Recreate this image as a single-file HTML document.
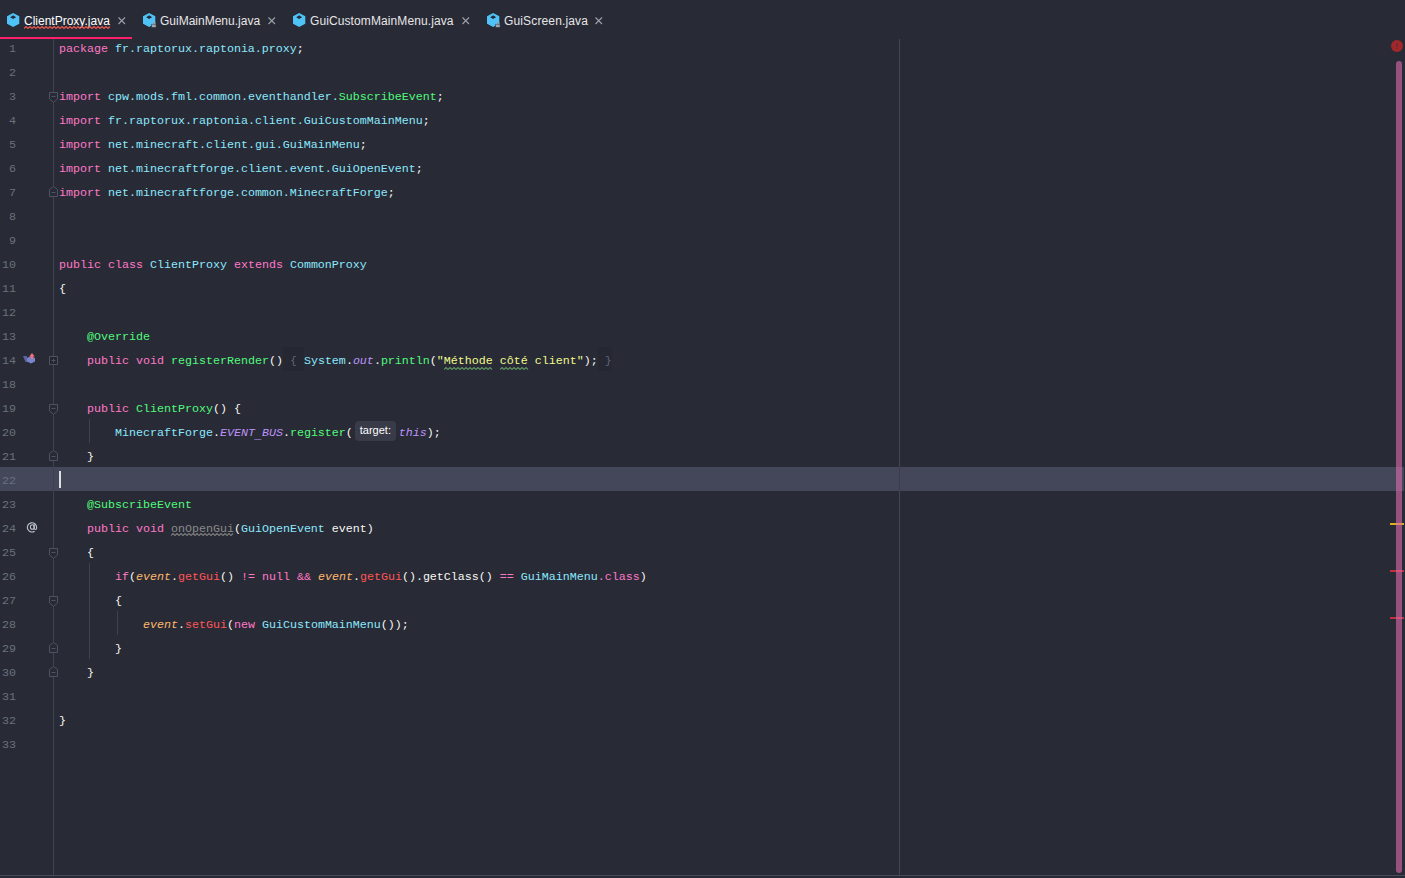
<!DOCTYPE html>
<html><head><meta charset="utf-8"><style>
html,body{margin:0;padding:0;}
body{width:1405px;height:878px;background:#282a36;position:relative;overflow:hidden;font-family:"Liberation Mono",monospace;}
.tabs{position:absolute;left:0;top:0;width:1405px;height:39px;background:#282a36;}
.ticon{position:absolute;top:12.9px;width:16px;height:16px;}
.ticon svg{display:block}
.tt{position:absolute;top:13px;font-family:"Liberation Sans",sans-serif;font-size:12px;line-height:16px;color:#e6e6e6;white-space:pre;}
.tt.act{color:#ffffff;}
.zz{position:absolute;display:block;}
.tx{position:absolute;top:16.5px;}
.uline{position:absolute;left:0;top:37px;width:132px;height:2px;background:#ff1e6a;}
.cur{position:absolute;left:0;width:1404px;height:24px;background:#44475a;}
.ln{position:absolute;left:0;width:16px;margin-top:2px;text-align:right;font-size:11.667px;line-height:24px;color:#68727e;}
.cl{position:absolute;left:59px;margin-top:2px;font-size:11.667px;line-height:24px;color:#f8f8f2;white-space:pre;}
.i{font-style:italic}
.fold{display:inline-block;vertical-align:top;height:23px;margin-top:-2px;line-height:24px;padding-top:2px;box-sizing:border-box;height:24px;color:#5f6577;background:#252732;}
.hint{display:inline-block;vertical-align:top;box-sizing:border-box;width:41px;height:20px;margin:0 3px 0 2px;position:relative;top:0px;font-family:"Liberation Sans",sans-serif;font-size:11px;line-height:19px;text-align:center;color:#ffffff;background:#393b48;border-radius:4px;}
.gutline{position:absolute;left:53px;top:39px;width:1px;height:836px;background:#3f4250;}
.margin{position:absolute;left:899px;top:39px;width:1px;height:836px;background:#434554;}
.fm{position:absolute;left:49px;}
.gi{position:absolute;}
.at{position:absolute;left:26.5px;margin-top:-0.5px;font-family:"Liberation Sans",sans-serif;font-size:12px;line-height:24px;color:#b8c4cc;}
.guide{position:absolute;width:1px;background:#3e4150;}
.caret{position:absolute;left:59px;width:2px;background:#e0e0e0;}
.sb{position:absolute;left:1396px;top:61px;width:6px;height:812px;border-radius:3px;background:rgba(223,109,174,0.6);}
.err{position:absolute;left:1391px;top:40px;width:12px;height:12px;border-radius:50%;background:#a12828;}
.err:before{content:"";position:absolute;left:5px;top:3px;width:2px;height:3.6px;background:#75283a;}
.err:after{content:"";position:absolute;left:5px;top:8px;width:2px;height:1.2px;background:#75283a;}
.mk{position:absolute;left:1390px;width:14px;height:2px;}
.hbar{position:absolute;left:0;top:875px;width:1405px;height:1px;background:#484a5c;}
</style></head><body>
<div class="tabs"><div class="ticon" style="left:7px"><svg width="16" height="16" viewBox="0 0 16 16"><path d="M6.15 0L12.3 3.3V10.8L6.15 14.1L0 10.8V3.3Z" fill="#4fc3f7"/><path d="M6.15 2.3L9.1 4.15L6.15 6L3.2 4.15Z" fill="#282a36"/></svg></div><div class="tt act" style="left:24px;letter-spacing:0px">ClientProxy.java</div><svg class="tx" style="left:117.5px" width="8" height="8" viewBox="0 0 8 8"><path d="M0.5 0.5L7 7M7 0.5L0.5 7" stroke="#9ba3a8" stroke-width="1.1"/></svg><div class="ticon" style="left:143px"><svg width="16" height="16" viewBox="0 0 16 16"><path d="M6.15 0L12.3 3.3V10.8L6.15 14.1L0 10.8V3.3Z" fill="#4fc3f7"/><path d="M6.15 2.3L9.1 4.15L6.15 6L3.2 4.15Z" fill="#282a36"/><path d="M8.6 11.2h4.5v3.3h-4.5z" fill="#9eaab2" stroke="#282a36" stroke-width="0.6"/><path d="M9.6 11.4v-1.1a1.25 1.25 0 0 1 2.5 0v1.1" fill="none" stroke="#9eaab2" stroke-width="0.9"/></svg></div><div class="tt" style="left:160px;letter-spacing:0px">GuiMainMenu.java</div><svg class="tx" style="left:267.5px" width="8" height="8" viewBox="0 0 8 8"><path d="M0.5 0.5L7 7M7 0.5L0.5 7" stroke="#9ba3a8" stroke-width="1.1"/></svg><div class="ticon" style="left:293px"><svg width="16" height="16" viewBox="0 0 16 16"><path d="M6.15 0L12.3 3.3V10.8L6.15 14.1L0 10.8V3.3Z" fill="#4fc3f7"/><path d="M6.15 2.3L9.1 4.15L6.15 6L3.2 4.15Z" fill="#282a36"/></svg></div><div class="tt" style="left:310px;letter-spacing:0.1px">GuiCustomMainMenu.java</div><svg class="tx" style="left:461.5px" width="8" height="8" viewBox="0 0 8 8"><path d="M0.5 0.5L7 7M7 0.5L0.5 7" stroke="#9ba3a8" stroke-width="1.1"/></svg><div class="ticon" style="left:487px"><svg width="16" height="16" viewBox="0 0 16 16"><path d="M6.15 0L12.3 3.3V10.8L6.15 14.1L0 10.8V3.3Z" fill="#4fc3f7"/><path d="M6.15 2.3L9.1 4.15L6.15 6L3.2 4.15Z" fill="#282a36"/><path d="M8.6 11.2h4.5v3.3h-4.5z" fill="#9eaab2" stroke="#282a36" stroke-width="0.6"/><path d="M9.6 11.4v-1.1a1.25 1.25 0 0 1 2.5 0v1.1" fill="none" stroke="#9eaab2" stroke-width="0.9"/></svg></div><div class="tt" style="left:504px;letter-spacing:0.14px">GuiScreen.java</div><svg class="tx" style="left:595px" width="8" height="8" viewBox="0 0 8 8"><path d="M0.5 0.5L7 7M7 0.5L0.5 7" stroke="#9ba3a8" stroke-width="1.1"/></svg><div class="uline"></div></div>
<div class="ln" style="top:35px">1</div><div class="cl" style="top:35px"><span style="color:#ff79c6">package</span> <span style="color:#8be9fd">fr.raptorux.raptonia.proxy</span><span style="color:#f8f8f2">;</span></div><div class="ln" style="top:59px">2</div><div class="ln" style="top:83px">3</div><div class="cl" style="top:83px"><span style="color:#ff79c6">import</span> <span style="color:#8be9fd">cpw.mods.fml.common.eventhandler.</span><span style="color:#50fa7b">SubscribeEvent</span><span style="color:#f8f8f2">;</span></div><div class="ln" style="top:107px">4</div><div class="cl" style="top:107px"><span style="color:#ff79c6">import</span> <span style="color:#8be9fd">fr.raptorux.raptonia.client.GuiCustomMainMenu</span><span style="color:#f8f8f2">;</span></div><div class="ln" style="top:131px">5</div><div class="cl" style="top:131px"><span style="color:#ff79c6">import</span> <span style="color:#8be9fd">net.minecraft.client.gui.GuiMainMenu</span><span style="color:#f8f8f2">;</span></div><div class="ln" style="top:155px">6</div><div class="cl" style="top:155px"><span style="color:#ff79c6">import</span> <span style="color:#8be9fd">net.minecraftforge.client.event.GuiOpenEvent</span><span style="color:#f8f8f2">;</span></div><div class="ln" style="top:179px">7</div><div class="cl" style="top:179px"><span style="color:#ff79c6">import</span> <span style="color:#8be9fd">net.minecraftforge.common.MinecraftForge</span><span style="color:#f8f8f2">;</span></div><div class="ln" style="top:203px">8</div><div class="ln" style="top:227px">9</div><div class="ln" style="top:251px">10</div><div class="cl" style="top:251px"><span style="color:#ff79c6">public</span> <span style="color:#ff79c6">class</span> <span style="color:#8be9fd">ClientProxy</span> <span style="color:#ff79c6">extends</span> <span style="color:#8be9fd">CommonProxy</span></div><div class="ln" style="top:275px">11</div><div class="cl" style="top:275px"><span style="color:#f8f8f2">{</span></div><div class="ln" style="top:299px">12</div><div class="ln" style="top:323px">13</div><div class="cl" style="top:323px">    <span style="color:#50fa7b">@Override</span></div><div class="ln" style="top:347px">14</div><div class="cl" style="top:347px">    <span style="color:#ff79c6">public</span> <span style="color:#ff79c6">void</span> <span style="color:#50fa7b">registerRender</span><span style="color:#f8f8f2">()</span><span class="fold"> { </span><span style="color:#8be9fd">System</span><span style="color:#f8f8f2">.</span><span class="i" style="color:#bd93f9">out</span><span style="color:#f8f8f2">.</span><span style="color:#50fa7b">println</span><span style="color:#f8f8f2">(</span><span style="color:#f1fa8c">&quot;Méthode côté client&quot;</span><span style="color:#f8f8f2">);</span><span class="fold"> }</span></div><div class="ln" style="top:371px">18</div><div class="ln" style="top:395px">19</div><div class="cl" style="top:395px">    <span style="color:#ff79c6">public</span> <span style="color:#50fa7b">ClientProxy</span><span style="color:#f8f8f2">() {</span></div><div class="ln" style="top:419px">20</div><div class="cl" style="top:419px">        <span style="color:#8be9fd">MinecraftForge</span><span style="color:#f8f8f2">.</span><span class="i" style="color:#bd93f9">EVENT<span style="position:relative;top:3px">_</span>BUS</span><span style="color:#f8f8f2">.</span><span style="color:#50fa7b">register</span><span style="color:#f8f8f2">(</span><span class="hint">target:</span><span class="i" style="color:#bd93f9">this</span><span style="color:#f8f8f2">);</span></div><div class="ln" style="top:443px">21</div><div class="cl" style="top:443px">    <span style="color:#f8f8f2">}</span></div><div class="cur" style="top:467px"></div><div class="ln" style="top:467px">22</div><div class="ln" style="top:491px">23</div><div class="cl" style="top:491px">    <span style="color:#50fa7b">@SubscribeEvent</span></div><div class="ln" style="top:515px">24</div><div class="cl" style="top:515px">    <span style="color:#ff79c6">public</span> <span style="color:#ff79c6">void</span> <span style="color:#8a8a8a">onOpenGui</span><span style="color:#f8f8f2">(</span><span style="color:#8be9fd">GuiOpenEvent</span><span style="color:#f8f8f2"> event)</span></div><div class="ln" style="top:539px">25</div><div class="cl" style="top:539px">    <span style="color:#f8f8f2">{</span></div><div class="ln" style="top:563px">26</div><div class="cl" style="top:563px">        <span style="color:#ff79c6">if</span><span style="color:#f8f8f2">(</span><span class="i" style="color:#ffb86c">event</span><span style="color:#f8f8f2">.</span><span style="color:#ff5555">getGui</span><span style="color:#f8f8f2">()</span> <span style="color:#ff79c6">!=</span> <span style="color:#ff79c6">null</span> <span style="color:#ff79c6">&amp;&amp;</span> <span class="i" style="color:#ffb86c">event</span><span style="color:#f8f8f2">.</span><span style="color:#ff5555">getGui</span><span style="color:#f8f8f2">().getClass()</span> <span style="color:#ff79c6">==</span> <span style="color:#8be9fd">GuiMainMenu</span><span style="color:#ff79c6">.class</span><span style="color:#f8f8f2">)</span></div><div class="ln" style="top:587px">27</div><div class="cl" style="top:587px">        <span style="color:#f8f8f2">{</span></div><div class="ln" style="top:611px">28</div><div class="cl" style="top:611px">            <span class="i" style="color:#ffb86c">event</span><span style="color:#f8f8f2">.</span><span style="color:#ff5555">setGui</span><span style="color:#f8f8f2">(</span><span style="color:#ff79c6">new</span> <span style="color:#8be9fd">GuiCustomMainMenu</span><span style="color:#f8f8f2">());</span></div><div class="ln" style="top:635px">29</div><div class="cl" style="top:635px">        <span style="color:#f8f8f2">}</span></div><div class="ln" style="top:659px">30</div><div class="cl" style="top:659px">    <span style="color:#f8f8f2">}</span></div><div class="ln" style="top:683px">31</div><div class="ln" style="top:707px">32</div><div class="cl" style="top:707px"><span style="color:#f8f8f2">}</span></div><div class="ln" style="top:731px">33</div>
<div class="gutline"></div>
<div class="guide" style="left:53px;top:467px;height:24px;background:#3c3f4e"></div>
<div class="margin"></div>
<div class="guide" style="left:899px;top:467px;height:24px;background:#3b3d4c"></div>
<svg class="fm" style="top:92px" width="10" height="12" viewBox="0 0 10 12"><path d="M0.5 0.5H8.5V7L4.5 10.5L0.5 7Z" fill="#282a36" stroke="#4f5260"/><path d="M2.5 4.5H6.5" stroke="#4f5260"/></svg><svg class="fm" style="top:404px" width="10" height="12" viewBox="0 0 10 12"><path d="M0.5 0.5H8.5V7L4.5 10.5L0.5 7Z" fill="#282a36" stroke="#4f5260"/><path d="M2.5 4.5H6.5" stroke="#4f5260"/></svg><svg class="fm" style="top:548px" width="10" height="12" viewBox="0 0 10 12"><path d="M0.5 0.5H8.5V7L4.5 10.5L0.5 7Z" fill="#282a36" stroke="#4f5260"/><path d="M2.5 4.5H6.5" stroke="#4f5260"/></svg><svg class="fm" style="top:596px" width="10" height="12" viewBox="0 0 10 12"><path d="M0.5 0.5H8.5V7L4.5 10.5L0.5 7Z" fill="#282a36" stroke="#4f5260"/><path d="M2.5 4.5H6.5" stroke="#4f5260"/></svg><svg class="fm" style="top:186px" width="10" height="12" viewBox="0 0 10 12"><path d="M0.5 10.5H8.5V3.5L4.5 0.5L0.5 3.5Z" fill="#282a36" stroke="#4f5260"/><path d="M2.5 6.5H6.5" stroke="#4f5260"/></svg><svg class="fm" style="top:450px" width="10" height="12" viewBox="0 0 10 12"><path d="M0.5 10.5H8.5V3.5L4.5 0.5L0.5 3.5Z" fill="#282a36" stroke="#4f5260"/><path d="M2.5 6.5H6.5" stroke="#4f5260"/></svg><svg class="fm" style="top:642px" width="10" height="12" viewBox="0 0 10 12"><path d="M0.5 10.5H8.5V3.5L4.5 0.5L0.5 3.5Z" fill="#282a36" stroke="#4f5260"/><path d="M2.5 6.5H6.5" stroke="#4f5260"/></svg><svg class="fm" style="top:666px" width="10" height="12" viewBox="0 0 10 12"><path d="M0.5 10.5H8.5V3.5L4.5 0.5L0.5 3.5Z" fill="#282a36" stroke="#4f5260"/><path d="M2.5 6.5H6.5" stroke="#4f5260"/></svg><svg class="fm" style="top:356px" width="10" height="10" viewBox="0 0 10 10"><path d="M0.5 0.5H8.5V8.5H0.5Z" fill="#24262f" stroke="#4f5260"/><path d="M2.5 4.5H6.5M4.5 2.5V6.5" stroke="#4f5260"/></svg>
<div class="guide" style="left:89px;top:419px;height:24px"></div><div class="guide" style="left:89px;top:563px;height:96px"></div><div class="guide" style="left:117px;top:611px;height:24px"></div>
<svg class="zz" style="left:24px;top:26px" width="87" height="3" viewBox="0 0 87 3"><polyline points="0.0,2.5 2.0,0.5 4.0,2.5 6.0,0.5 8.0,2.5 10.0,0.5 12.0,2.5 14.0,0.5 16.0,2.5 18.0,0.5 20.0,2.5 22.0,0.5 24.0,2.5 26.0,0.5 28.0,2.5 30.0,0.5 32.0,2.5 34.0,0.5 36.0,2.5 38.0,0.5 40.0,2.5 42.0,0.5 44.0,2.5 46.0,0.5 48.0,2.5 50.0,0.5 52.0,2.5 54.0,0.5 56.0,2.5 58.0,0.5 60.0,2.5 62.0,0.5 64.0,2.5 66.0,0.5 68.0,2.5 70.0,0.5 72.0,2.5 74.0,0.5 76.0,2.5 78.0,0.5 80.0,2.5 82.0,0.5 84.0,2.5 86.0,0.5" fill="none" stroke="#e8584f" stroke-width="1.15"/></svg><svg class="zz" style="left:171px;top:533px" width="64" height="3" viewBox="0 0 64 3"><polyline points="0.0,2.5 2.0,0.5 4.0,2.5 6.0,0.5 8.0,2.5 10.0,0.5 12.0,2.5 14.0,0.5 16.0,2.5 18.0,0.5 20.0,2.5 22.0,0.5 24.0,2.5 26.0,0.5 28.0,2.5 30.0,0.5 32.0,2.5 34.0,0.5 36.0,2.5 38.0,0.5 40.0,2.5 42.0,0.5 44.0,2.5 46.0,0.5 48.0,2.5 50.0,0.5 52.0,2.5 54.0,0.5 56.0,2.5 58.0,0.5 60.0,2.5 62.0,0.5" fill="none" stroke="#7a7a7a" stroke-width="1.15"/></svg><svg class="zz" style="left:444px;top:367px" width="50" height="3" viewBox="0 0 50 3"><polyline points="0.0,2.5 2.0,0.5 4.0,2.5 6.0,0.5 8.0,2.5 10.0,0.5 12.0,2.5 14.0,0.5 16.0,2.5 18.0,0.5 20.0,2.5 22.0,0.5 24.0,2.5 26.0,0.5 28.0,2.5 30.0,0.5 32.0,2.5 34.0,0.5 36.0,2.5 38.0,0.5 40.0,2.5 42.0,0.5 44.0,2.5 46.0,0.5 48.0,2.5" fill="none" stroke="#5b8f5e" stroke-width="1.15"/></svg><svg class="zz" style="left:500px;top:367px" width="29" height="3" viewBox="0 0 29 3"><polyline points="0.0,2.5 2.0,0.5 4.0,2.5 6.0,0.5 8.0,2.5 10.0,0.5 12.0,2.5 14.0,0.5 16.0,2.5 18.0,0.5 20.0,2.5 22.0,0.5 24.0,2.5 26.0,0.5 28.0,2.5" fill="none" stroke="#5b8f5e" stroke-width="1.15"/></svg>
<svg class="gi" style="left:22px;top:352px" width="16" height="14" viewBox="0 0 16 14"><path d="M1 4L5 4L5 10L3.5 10Z" fill="#5865a0"/><path d="M9 4L13 6V9.5L9 11.5L5 9.5V6Z" fill="#7986cb"/><path d="M10 1L12.8 4.5H11V7H9V4.5H7.2Z" fill="#f07178"/></svg>
<svg class="gi" style="left:26px;top:521px" width="12" height="12" viewBox="0 0 12 12"><path d="M8.6 10.2A4.6 4.6 0 1 1 10.6 6.2V7.3A1.2 1.2 0 0 1 8.2 7.3V3.6" fill="none" stroke="#b9c3ca" stroke-width="1.15"/><ellipse cx="6.3" cy="6" rx="1.9" ry="2.3" fill="none" stroke="#b9c3ca" stroke-width="1.1"/></svg>
<div class="caret" style="top:471px;height:17px"></div>
<div class="err"></div>
<div class="mk" style="top:523px;background:#dcab1e"></div>
<div class="mk" style="top:570px;background:#c0323b"></div>
<div class="mk" style="top:617px;background:#c0323b"></div>
<div class="sb"></div>
<div class="hbar"></div>
</body></html>
